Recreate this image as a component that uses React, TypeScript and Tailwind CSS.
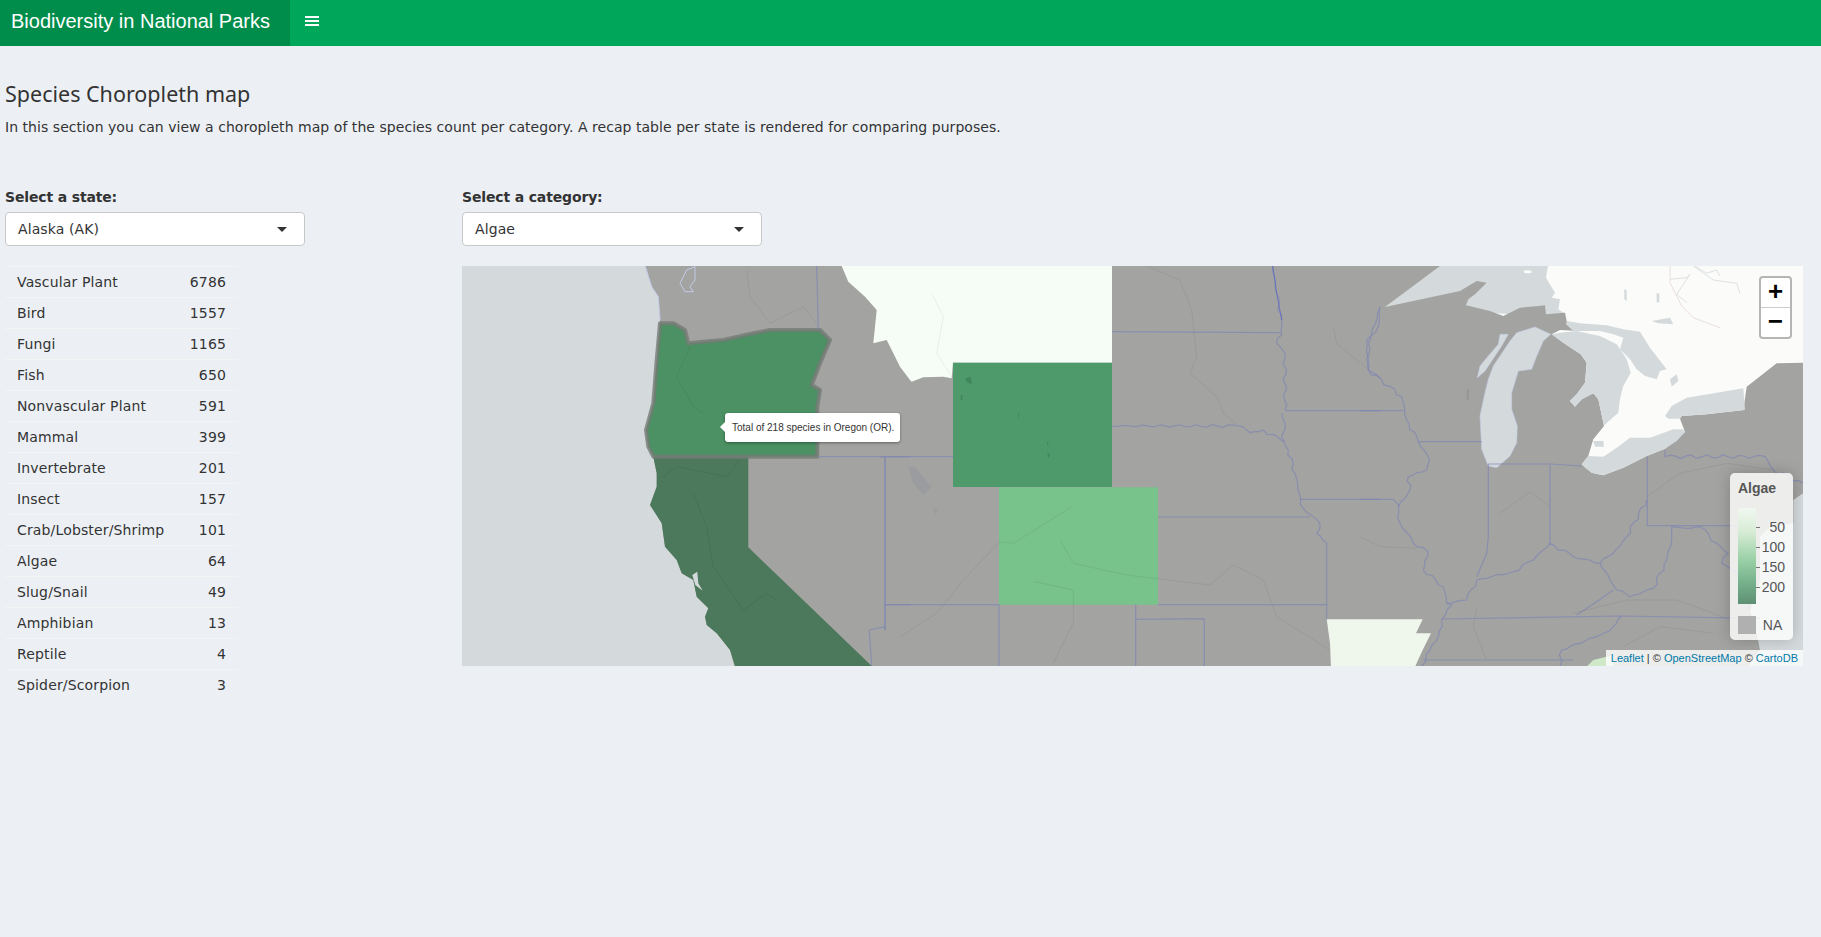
const rows: [string, number][] = [
  ["Vascular Plant", 6786],
  ["Bird", 1557],
  ["Fungi", 1165],
  ["Fish", 650],
  ["Nonvascular Plant", 591],
  ["Mammal", 399],
  ["Invertebrate", 201],
  ["Insect", 157],
  ["Crab/Lobster/Shrimp", 101],
  ["Algae", 64],
  ["Slug/Snail", 49],
  ["Amphibian", 13],
  ["Reptile", 4],
  ["Spider/Scorpion", 3],
];

type Pt = [number, number];
const m = (ox: number, pts: Pt[]) =>
  pts.map(([x, y]) => `${(x / 3 + ox).toFixed(1)},${(y / 3 - 6).toFixed(1)}`).join(" ");
const n = (pts: Pt[]) => pts.map(([x, y]) => `${(x / 3 + 998).toFixed(1)},${(y / 3).toFixed(1)}`).join(" ");
const A = -2;
const B = 418;
const C = 898;

const wiggle = (pts: Pt[]): Pt[] => {
  const out: Pt[] = [];
  for (let i = 0; i < pts.length - 1; i++) {
    const [x1, y1] = pts[i];
    const [x2, y2] = pts[i + 1];
    const len = Math.hypot(x2 - x1, y2 - y1);
    const steps = Math.max(1, Math.round(len / 16));
    for (let s = 0; s < steps; s++) {
      const t = s / steps;
      const w = s === 0 ? 0 : Math.sin(i * 2.1 + s * 1.9) * 4 + Math.sin(s * 4.3 + i) * 2;
      out.push([x1 + (x2 - x1) * t + (-(y2 - y1) / len) * w, y1 + (y2 - y1) * t + ((x2 - x1) / len) * w]);
    }
  }
  out.push(pts[pts.length - 1]);
  return out;
};

const oregon: Pt[] = [
  [600, 190], [640, 190], [675, 210], [685, 250], [730, 245], [790, 240], [880, 220], [930, 210], [1080, 210],
  [1110, 240], [1080, 310], [1055, 375], [1080, 390], [1072, 440], [1072, 590], [580, 590], [565, 560], [558, 510],
  [580, 430], [590, 300],
];
const california: Pt[] = [
  [580, 590], [865, 590], [865, 862], [1235, 1218], [825, 1218], [810, 1170], [770, 1120], [740, 1095], [735, 1070],
  [745, 1045], [710, 1010], [700, 960], [665, 940], [650, 900], [615, 860], [605, 790], [570, 735], [590, 680], [590, 640],
];
const montana: Pt[] = [
  ...[[1145, 18], [1165, 65], [1215, 110], [1250, 150], [1240, 250], [1280, 240], [1320, 320], [1350, 360]].map(
    ([x, y]) => [x - 1260, y] as Pt,
  ),
  [95, 365], [130, 352], [190, 350], [215, 355], [219, 308], [696, 308], [696, 18],
];

const land = [
  "183,-2",
  m(A, [
    [575, 80], [595, 110], [600, 180], [590, 300], [580, 430], [558, 510], [565, 560], [580, 590], [590, 640], [590, 680],
    [570, 735], [605, 790], [615, 860], [650, 900], [665, 940], [700, 960], [710, 1010], [745, 1045], [735, 1070],
    [740, 1095], [770, 1120], [810, 1170], [825, 1225],
  ]),
  m(C, [
    [1160, 1225], [1200, 1170], [1190, 1120], [1170, 1050], [1190, 1000], [1200, 960], [1200, 830], [1230, 800], [1300, 790],
    [1300, 720], [1329, 700], [1335, 308], [1250, 310], [1160, 380], [1150, 450],
  ]),
  n([
    [740, 445], [665, 450], [660, 458], [675, 498], [615, 548], [560, 570], [490, 605], [430, 628], [395, 620], [365, 595],
    [385, 570], [400, 520], [432, 480], [415, 400], [400, 382], [365, 400], [345, 422], [330, 405], [350, 385], [375, 350],
    [380, 290], [362, 265], [310, 230], [275, 205], [300, 192], [355, 195], [345, 180], [320, 165], [315, 140], [258, 145],
    [255, 118], [235, 120], [180, 125], [130, 150], [90, 135], [18, 118], [25, 100], [45, 85], [80, 50], [50, 45], [0, 75],
    [-225, 123], [-60, 0], [-60, -10],
  ]),
].join(" ");

const superior: Pt[] = [
  [-60, -5], [265, -5], [258, 35], [285, 80], [275, 95], [300, 100], [295, 130], [318, 145], [258, 150], [-225, 123],
];
const michigan: Pt[] = [
  [225, 183], [272, 205], [250, 225], [230, 270], [215, 310], [175, 315], [155, 380], [155, 430], [172, 480], [170, 530],
  [150, 570], [110, 605], [85, 600], [65, 550], [60, 450], [75, 380], [85, 340], [100, 300], [150, 225], [170, 200],
];
const greenBay: Pt[] = [
  [52, 335], [60, 300], [85, 270], [115, 235], [120, 205], [145, 205], [125, 240], [95, 285], [75, 315],
];
const huron: Pt[] = [
  [275, 205], [300, 200], [350, 195], [420, 210], [470, 235], [500, 280], [512, 320], [490, 360], [480, 400], [475, 440],
  [432, 478], [415, 400], [400, 382], [365, 400], [345, 422], [330, 405], [350, 385], [375, 350], [380, 290], [362, 265], [310, 230],
];
const georgian: Pt[] = [
  [320, 165], [360, 172], [440, 178], [490, 190], [540, 197], [570, 245], [620, 310], [600, 315], [590, 340], [555, 330],
  [530, 310], [510, 280], [480, 250], [490, 215], [460, 205], [420, 195], [365, 195], [340, 195], [318, 175],
];
const erie: Pt[] = [
  [365, 595], [385, 570], [430, 572], [470, 545], [510, 515], [570, 515], [640, 490], [668, 490], [675, 498], [650, 525],
  [615, 548], [560, 570], [490, 605], [430, 628], [395, 620], [375, 605],
];
const ontario: Pt[] = [
  [615, 450], [635, 420], [680, 395], [770, 380], [850, 367], [855, 432], [740, 445], [665, 450], [660, 458], [625, 458],
];
const smallLakes: Pt[][] = [
  [[400, 525], [430, 525], [432, 542], [405, 542]],
  [[630, 340], [650, 325], [655, 345], [635, 362]],
  [[575, 165], [630, 155], [640, 175], [595, 172]],
  [[493, 70], [500, 72], [500, 105], [493, 100]],
  [[590, 80], [598, 85], [598, 110], [590, 108]],
];

const stateLines: [number, Pt[]][] = [
  [A, [[1070, 18], [1075, 210]]],
  [A, [[1075, 590], [1350, 590]]],
  [A, [[1275, 590], [1275, 1110]]],
  [A, [[1275, 1034], [1350, 1034]]],
  [A, [[1275, 1100], [1228, 1110], [1235, 1218]]],
  [B, [[220, 590], [0, 590]]],
  [B, [[15, 590], [15, 1110]]],
  [B, [[15, 1034], [357, 1034]]],
  [B, [[357, 1034], [357, 1218]]],
  [B, [[696, 215], [1205, 218]]],
  [B, [[696, 498], [1075, 498], [1110, 518], [1150, 510], [1210, 545]]],
  [B, [[1178, 18], [1190, 100], [1205, 180], [1205, 225], [1190, 250], [1215, 280], [1215, 450]]],
  [B, [[1215, 452], [1500, 452]]],
  [B, [[1205, 460], [1215, 490], [1205, 530], [1225, 570], [1245, 640], [1258, 700], [1270, 745], [1320, 790], [1310, 820], [1340, 848]]],
  [B, [[1340, 848], [1340, 1078]]],
  [B, [[1260, 718], [1500, 718]]],
  [B, [[834, 771], [1290, 771]]],
  [B, [[834, 1034], [1340, 1034]]],
  [B, [[767, 1034], [767, 1218]]],
  [B, [[767, 1078], [973, 1076], [973, 1218]]],
  [B, [[1500, 145], [1465, 250], [1465, 330], [1490, 345], [1500, 355]]],
  [C, [[60, 140], [55, 200], [20, 240], [25, 330], [125, 410], [140, 480], [175, 545], [205, 590], [200, 630], [145, 650], [150, 690], [115, 740], [120, 790], [170, 860], [205, 875], [190, 930], [250, 980], [260, 1030], [275, 1035], [245, 1080], [235, 1130], [210, 1170], [185, 1218]]],
  [C, [[175, 545], [365, 545]]],
  [C, [[0, 452], [130, 452]]],
  [C, [[0, 718], [100, 718], [120, 740]]],
  [C, [[385, 612], [385, 830], [380, 880], [350, 950]]],
  [C, [[260, 1030], [320, 1020], [350, 960], [460, 935], [520, 900], [570, 850], [640, 890], [720, 910], [760, 880], [800, 830], [860, 720]]],
  [C, [[385, 612], [570, 612], [665, 618]]],
  [C, [[570, 615], [570, 850]]],
  [C, [[245, 1077], [785, 1068], [1200, 1075]]],
  [C, [[862, 590], [862, 797], [1130, 797]]],
  [C, [[915, 570], [915, 590], [1215, 590], [1240, 630], [1329, 670]]],
  [C, [[720, 910], [770, 990], [810, 1010], [880, 985], [920, 900], [935, 840]]],
  [C, [[935, 840], [935, 800], [980, 805]]],
  [C, [[980, 805], [1020, 800], [1070, 850], [1105, 880], [1085, 910], [1130, 940], [1170, 1050]]],
  [C, [[760, 990], [710, 1025], [650, 1065]]],
  [C, [[785, 1068], [760, 1100], [720, 1125], [605, 1170], [600, 1218]]],
  [C, [[190, 1200], [640, 1200]]],
];

const faint: [number, Pt[]][] = [
  [A, [[860, 30], [870, 110], [930, 190], [1030, 140], [1070, 190]]],
  [A, [[690, 260], [650, 350], [700, 440], [730, 460]]],
  [A, [[610, 650], [650, 620], [800, 650], [840, 600]]],
  [A, [[700, 700], [740, 800], [760, 920], [850, 1050], [920, 1000], [950, 1020]]],
  [B, [[575, 740], [480, 800], [400, 850], [355, 845]]],
  [B, [[540, 840], [580, 910], [740, 945], [990, 975], [1060, 915], [1150, 960], [1190, 1070], [1350, 1170]]],
  [B, [[465, 965], [580, 990], [580, 1090], [520, 1210]]],
  [B, [[355, 850], [250, 960], [170, 1060], [60, 1130]]],
  [B, [[800, 18], [900, 60], [935, 150], [950, 290], [930, 340], [1010, 410], [1030, 460], [1075, 498]]],
  [B, [[155, 100], [190, 170], [170, 280], [215, 350]]],
  [B, [[1360, 200], [1370, 250], [1460, 325]]],
  [C, [[420, 760], [510, 695], [570, 740]]],
  [C, [[860, 710], [960, 640], [1100, 610], [1240, 630]]],
  [C, [[0, 830], [60, 860], [170, 865]]],
  [C, [[350, 1040], [340, 1100], [380, 1200]]],
  [C, [[640, 1060], [800, 1020], [950, 1020], [1100, 1075]]],
  [C, [[790, 1160], [900, 1100], [1060, 1120]]],
];

const Select = ({ value }: { value: string }) => (
  <div className="flex h-[34px] w-[300px] items-center justify-between rounded border border-[#c8c8c8] bg-white pl-3 pr-[17px] text-[14px] tracking-[0.1px] text-[#333]">
    <span>{value}</span>
    <svg width="10" height="5" viewBox="0 0 10 5">
      <path d="M0 0h10L5 5z" fill="#333" />
    </svg>
  </div>
);

const ticks = ["50", "100", "150", "200"];
const water = "#d4dadc";

export default function App() {
  return (
    <div className="h-[937px] w-[1821px] overflow-hidden bg-[#ecf0f5] font-['DejaVu_Sans',sans-serif] text-[14px] leading-5 text-[#333]">
      <header className="flex h-[46px] bg-[#00a65a]">
        <div className="flex w-[290px] items-center bg-[#008d4c] pb-[4px] pl-[11px] font-['Liberation_Sans',sans-serif] text-[20px] text-white">
          Biodiversity in National Parks
        </div>
        <div className="flex items-center px-[15px] pb-[4px]">
          <svg width="14" height="10" viewBox="0 0 14 10" fill="white">
            <rect width="14" height="2" />
            <rect y="4" width="14" height="2" />
            <rect y="8" width="14" height="2" />
          </svg>
        </div>
      </header>

      <main className="pl-[5px] pt-[35px]">
        <h3 className="h-[25px] font-['Noto_Sans',sans-serif] text-[21.5px] leading-[25px] text-[#333]">
          Species Choropleth map
        </h3>
        <p className="mt-[11px] tracking-[0.045px]">
          In this section you can view a choropleth map of the species count per category. A recap table per state is
          rendered for comparing purposes.
        </p>

        <div className="mt-[50px] flex">
          <div className="w-[457px]">
            <label className="block font-bold tracking-[-0.15px]">Select a state:</label>
            <div className="mt-[5px]">
              <Select value="Alaska (AK)" />
            </div>
            <table className="mt-[20px] w-[233px] border-collapse tracking-[0.15px]">
              <tbody>
                {rows.map(([name, count]) => (
                  <tr key={name} className="h-[31px] border-t border-[#f4f4f4]">
                    <td className="pl-3">{name}</td>
                    <td className="pr-3 text-right">{count}</td>
                  </tr>
                ))}
              </tbody>
            </table>
          </div>

          <div>
            <label className="block font-bold tracking-[-0.15px]">Select a category:</label>
            <div className="mt-[5px]">
              <Select value="Algae" />
            </div>
            <div className="relative mt-[20px] h-[400px] w-[1341px] overflow-hidden bg-[#d4dadc]">
              <svg width="1341" height="400" viewBox="0 0 1341 400" className="block">
                <rect x="300" y="0" width="1041" height="400" fill="#fbfbfa" />
                <rect x="1180" y="220" width="161" height="180" fill={water} />
                <polygon points={n(superior)} fill={water} />
                <polygon points={land} fill="#a3a3a1" />
                <polygon points={n(michigan)} fill={water} stroke="#c3cbe8" strokeWidth="0.6" />
                <polygon points={n(greenBay)} fill={water} stroke="#c3cbe8" strokeWidth="0.6" />
                <polygon points={n(huron)} fill={water} />
                <polygon points={n(georgian)} fill={water} />
                <polygon points={n(erie)} fill={water} />
                <polygon points={n(ontario)} fill={water} />
                {smallLakes.map((p, i) => (
                  <polygon key={i} points={n(p)} fill={water} />
                ))}
                <ellipse cx={203 / 3 + 998} cy={17 / 3} rx="4" ry="1.5" fill="#fbfbfa" />
                <polyline
                  points={n([[630, 0], [630, 50], [665, 120], [700, 155], [780, 185]])}
                  fill="none"
                  stroke="#eadfdf"
                  strokeWidth="1"
                />
                <polyline
                  points={n([[705, 0], [740, 22], [770, 12], [780, 30]])}
                  fill="none"
                  stroke="#dde1e2"
                  strokeWidth="1"
                />
                <polyline
                  points={n([[630, 40], [680, 35], [690, 25], [650, 85], [680, 110]])}
                  fill="none"
                  stroke="#dde1e2"
                  strokeWidth="1"
                />
                <polyline
                  points={m(C, [[1000, 18], [1060, 60], [1130, 70], [1140, 100]])}
                  fill="none"
                  stroke="#dde1e2"
                  strokeWidth="1"
                />

                <polygon points={m(B, montana)} fill="#f6fcf6" />
                <polygon
                  points={m(B, [[1340, 1078], [1628, 1078], [1608, 1120], [1653, 1120], [1628, 1170], [1603, 1225], [1353, 1225], [1350, 1150]])}
                  fill="#eff7ec"
                />
                <polygon points={m(C, [[675, 1225], [700, 1200], [760, 1185], [760, 1225]])} fill="#cfe8c8" />

                <polygon points={m(B, [[219, 308], [696, 308], [696, 681], [219, 681]])} fill="#4f9a6b" />
                <polygon points={m(B, [[357, 682], [834, 682], [834, 1034], [357, 1034]])} fill="#78c28b" />
                <polygon points={m(A, california)} fill="#4c785b" />
                <polygon
                  points={m(A, oregon)}
                  fill="#4b9163"
                  stroke="#747a76"
                  strokeOpacity="0.8"
                  strokeWidth="4"
                  strokeLinejoin="round"
                />

                <polygon points={m(B, [[85, 620], [105, 622], [155, 680], [130, 705], [100, 670]])} fill="#9a9c9f" />
                <polygon points={m(B, [[160, 745], [175, 750], [165, 765]])} fill="#9a9c9f" />
                <polygon points={m(B, [[255, 355], [272, 350], [276, 372], [262, 368]])} fill="#40875c" />
                <polygon points={m(B, [[242, 405], [248, 405], [247, 420], [242, 420]])} fill="#40875c" />
                <polygon points={m(B, [[413, 460], [418, 460], [416, 478]])} fill="#40875c" />
                <polygon points={m(B, [[500, 545], [505, 545], [504, 560]])} fill="#40875c" />
                <polygon points={m(B, [[502, 575], [510, 585], [505, 595]])} fill="#40875c" />
                <polygon points={n([[20, 370], [28, 370], [26, 402], [20, 402]])} fill="#979797" />

                {faint.map(([ox, p], i) => (
                  <polyline key={i} points={m(ox, p)} fill="none" stroke="#000" strokeOpacity="0.06" strokeWidth="1" />
                ))}
                {stateLines.map(([ox, p], i) => (
                  <polyline
                    key={i}
                    points={m(ox, p.length >= 5 ? wiggle(p) : p)}
                    fill="none"
                    stroke="#7f86b4"
                    strokeOpacity="0.7"
                    strokeWidth="1.2"
                    strokeLinejoin="round"
                  />
                ))}
                <polyline points={m(B, [[1178, 18], [1190, 100], [1205, 180]])} fill="none" stroke="#4658c8" strokeOpacity="0.6" strokeWidth="1" />
                <polyline points={m(A, [[555, 18], [575, 80], [595, 110], [600, 180]])} fill="none" stroke="#c3cbe8" strokeWidth="1" />
                <polyline points={m(A, [[660, 70], [680, 30], [705, 20], [705, 60], [690, 80], [700, 95], [675, 95], [660, 70]])} fill="none" stroke="#c3cbe8" strokeWidth="1" />
                <polygon points={m(A, [[697, 945], [712, 935], [715, 970], [728, 992], [706, 975]])} fill={water} />
              </svg>

              <div className="absolute left-[263px] top-[147px] flex h-[29px] items-center rounded-[3px] bg-white pl-[7px] pr-[6px] font-['Liberation_Sans',sans-serif] text-[10px] text-[#333] shadow-[0_1px_3px_rgba(0,0,0,0.4)] before:absolute before:left-[-5px] before:top-[9px] before:border-y-[5px] before:border-r-[5px] before:border-y-transparent before:border-r-white before:content-['']">
                Total of 218 species in Oregon (OR).
              </div>

              <div className="absolute right-[11px] top-[10px] w-[33px] rounded-[4px] border-2 border-[#b5b5b4] bg-white font-['Liberation_Mono',monospace] text-[26px] font-bold text-black">
                <div className="flex h-[30px] items-center justify-center rounded-t-[2px] border-b border-[#ccc] pt-px">+</div>
                <div className="flex h-[29px] items-center justify-center pt-px">−</div>
              </div>

              <div className="absolute right-[10px] top-[207px] h-[167px] w-[63px] rounded-[5px] bg-white/80 px-2 pt-[7px] font-['Liberation_Sans',sans-serif] text-[14px] leading-4 text-[#555] shadow-[0_0_15px_rgba(0,0,0,0.2)]">
                <div className="font-bold">Algae</div>
                <div className="mt-[12px] flex">
                  <div className="h-[96px] w-[18px] bg-[linear-gradient(to_bottom,#f1f8f1,#d7ecd5_25%,#98cfa5_55%,#75b08c_78%,#5e9073)]" />
                  <div className="flex-1 pt-[9px]">
                    {ticks.map((t) => (
                      <div key={t} className="flex h-5 items-center">
                        <span className="h-px w-1 bg-[#777]" />
                        <span className="flex-1 text-right">{t}</span>
                      </div>
                    ))}
                  </div>
                </div>
                <div className="mt-3 flex items-center">
                  <div className="h-[18px] w-[18px] bg-[#b0b0b0]" />
                  <span className="ml-1 flex-1 text-center">NA</span>
                </div>
              </div>

              <div className="absolute bottom-0 right-0 flex h-4 items-center bg-white/80 px-[5px] font-['Liberation_Sans',sans-serif] text-[11px] text-[#333]">
                <span className="text-[#0078a8]">Leaflet</span>
                <span>&nbsp;| ©&nbsp;</span>
                <span className="text-[#0078a8]">OpenStreetMap</span>
                <span>&nbsp;©&nbsp;</span>
                <span className="text-[#0078a8]">CartoDB</span>
              </div>
            </div>
          </div>
        </div>
      </main>
    </div>
  );
}
